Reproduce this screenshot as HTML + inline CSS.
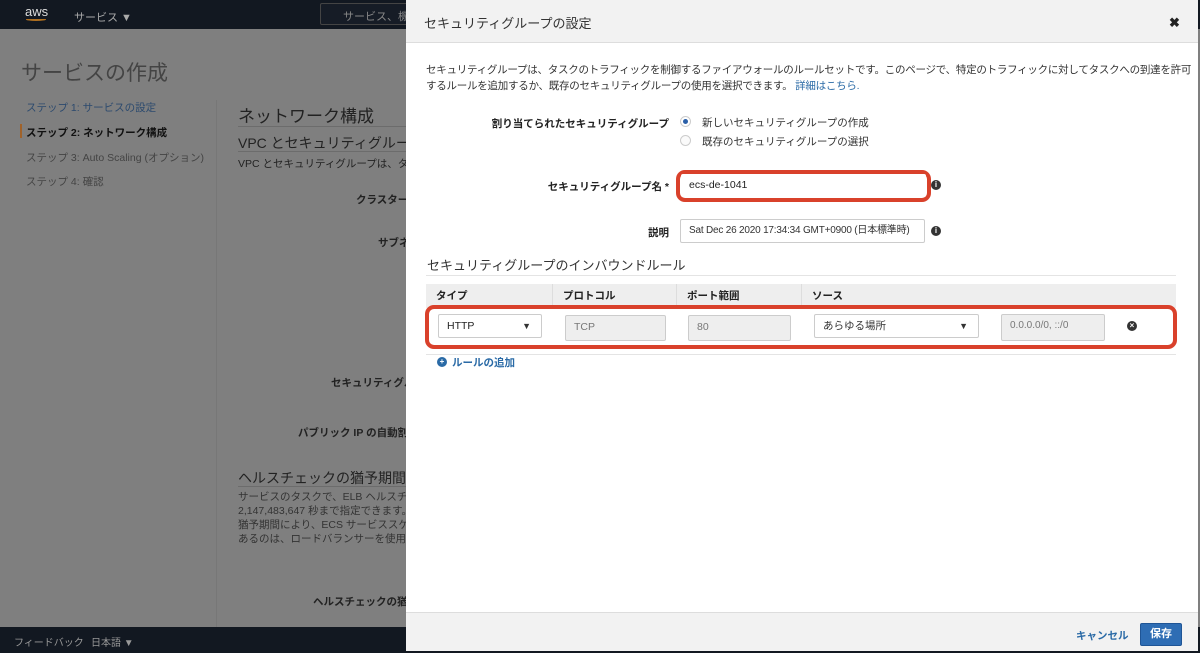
<!DOCTYPE html>
<html><head><meta charset="utf-8"><style>
*{box-sizing:border-box;margin:0;padding:0}
body{width:1200px;height:653px;overflow:hidden;position:relative;background:#7f7f7f;font-family:"Liberation Sans","Noto Sans CJK JP",sans-serif;font-size:11px;color:#222}
.a{position:absolute;white-space:nowrap}
.top{left:0;top:0;width:1200px;height:29px;background:#121821}
.bot{left:0;top:627px;width:1200px;height:26px;background:#121821}
.modal{left:406px;top:0;width:792px;height:651px;background:#fff;border-radius:0 0 4px 4px}
.mh{left:0;top:0;width:792px;height:43px;background:#f2f2f2;border-bottom:1px solid #ddd}
.mf{left:0;top:612px;width:792px;height:39px;background:#f2f2f2;border-top:1px solid #ddd}
.inp{border:1px solid #ccc;border-radius:2px;background:#fff;font-size:10.5px;padding-left:8px;line-height:22px;height:24px}
.ro{background:#eee;color:#777}
.sel:after{content:"▼";position:absolute;right:10px;font-size:9px;color:#333}
.th{top:284px;height:24px;background:#eee;font-weight:bold;font-size:10.5px;line-height:24px;padding-left:10px;border-right:1px solid #ddd}
.red{border:4px solid #d9412b;border-radius:9px}
.info{width:10px;height:10px;border-radius:50%;background:#333;color:#fff;font-size:8px;line-height:10px;text-align:center;font-weight:bold}
.lbl{left:0;width:263px;text-align:right;font-weight:bold;font-size:10.5px}
</style></head><body>
<div class="a top"></div>
<div class="a" style="left:25px;top:4px;color:#ddd;font-size:13px">aws</div>
<div class="a" style="left:26px;top:18px;width:20px;height:3px;border-bottom:2px solid #b07020;border-radius:0 0 50% 50%"></div>
<div class="a" style="left:74px;top:9px;color:#aaa;font-size:11px">サービス ▼</div>
<div class="a" style="left:320px;top:3px;width:90px;height:22px;border:1px solid #444;border-radius:2px;background:#161c26;color:#888;padding:4px 0 0 22px;font-size:11px">サービス、機</div>
<div class="a" style="left:21px;top:57px;font-size:21px;color:#444">サービスの作成</div>
<div class="a" style="left:26px;top:100px;color:#2c4a6e;font-size:10.5px">ステップ 1: サービスの設定</div>
<div class="a" style="left:20px;top:124px;width:2px;height:14px;background:#a0622a"></div>
<div class="a" style="left:26px;top:125px;font-weight:bold;color:#111;font-size:10.5px">ステップ 2: ネットワーク構成</div>
<div class="a" style="left:26px;top:150px;color:#444;font-size:10.5px">ステップ 3: Auto Scaling (オプション)</div>
<div class="a" style="left:26px;top:174px;color:#444;font-size:10.5px">ステップ 4: 確認</div>
<div class="a" style="left:216px;top:100px;width:1px;height:527px;background:#777"></div>
<div class="a" style="left:238px;top:102px;font-size:17px;color:#222">ネットワーク構成</div>
<div class="a" style="left:238px;top:126px;width:170px;height:1px;background:#6c6c6c"></div>
<div class="a" style="left:238px;top:133px;font-size:14px;color:#222">VPC とセキュリティグループ</div>
<div class="a" style="left:238px;top:151px;width:170px;height:1px;background:#6c6c6c"></div>
<div class="a" style="left:238px;top:156px;color:#222;font-size:10.5px">VPC とセキュリティグループは、タス</div>
<div class="a" style="left:356px;top:192px;font-weight:bold;font-size:10.5px">クラスター</div>
<div class="a" style="left:378px;top:235px;font-weight:bold;font-size:10.5px">サブネ</div>
<div class="a" style="left:331px;top:375px;font-weight:bold;font-size:10.5px">セキュリティグル</div>
<div class="a" style="left:298px;top:425px;font-weight:bold;font-size:10.5px">パブリック IP の自動割</div>
<div class="a" style="left:238px;top:468px;font-size:14px">ヘルスチェックの猶予期間</div>
<div class="a" style="left:238px;top:486px;width:170px;height:1px;background:#6c6c6c"></div>
<div class="a" style="left:238px;top:490px;color:#333;line-height:14px;font-size:10.5px">サービスのタスクで、ELB ヘルスチェ<br>2,147,483,647 秒まで指定できます。<br>猶予期間により、ECS サービススケジ<br>あるのは、ロードバランサーを使用す</div>
<div class="a" style="left:313px;top:594px;font-weight:bold;font-size:10.5px">ヘルスチェックの猶</div>
<div class="a bot"></div>
<div class="a" style="left:14px;top:634px;color:#999;font-size:10px">フィードバック</div>
<div class="a" style="left:91px;top:634px;color:#999;font-size:10px">日本語 ▼</div>

<div class="a modal">
<div class="a mh"></div>
<div class="a" style="left:18px;top:13px;font-size:13px;color:#333">セキュリティグループの設定</div>
<div class="a" style="left:763px;top:15px;font-size:13px;font-weight:bold">✖</div>
<div class="a" style="left:20px;top:62px;line-height:16px;color:#333;font-size:10.5px;letter-spacing:-0.25px">セキュリティグループは、タスクのトラフィックを制御するファイアウォールのルールセットです。このページで、特定のトラフィックに対してタスクへの到達を許可<br>するルールを追加するか、既存のセキュリティグループの使用を選択できます。 <span style="color:#2a6aa6">詳細はこちら.</span></div>
<div class="a lbl" style="top:116px">割り当てられたセキュリティグループ</div>
<div class="a" style="left:274px;top:116px;width:11px;height:11px;border-radius:50%;border:1px solid #ccc;background:#fff"><div style="margin:2px;width:5px;height:5px;border-radius:50%;background:#2a5fa8"></div></div>
<div class="a" style="left:296px;top:115px;color:#333;font-size:10.5px">新しいセキュリティグループの作成</div>
<div class="a" style="left:274px;top:135px;width:11px;height:11px;border-radius:50%;border:1px solid #ccc;background:#fafafa"></div>
<div class="a" style="left:296px;top:134px;color:#333;font-size:10.5px">既存のセキュリティグループの選択</div>
<div class="a lbl" style="top:179px">セキュリティグループ名 *</div>
<div class="a red" style="left:270px;top:170px;width:255px;height:32px"></div>
<div class="a inp" style="left:275px;top:174px;width:245px;height:23px;border:none">ecs-de-1041</div>
<div class="a info" style="left:525px;top:180px">i</div>
<div class="a lbl" style="top:225px">説明</div>
<div class="a inp" style="left:274px;top:219px;width:245px;color:#333;font-size:10px;letter-spacing:-0.2px">Sat Dec 26 2020 17:34:34 GMT+0900 (日本標準時)</div>
<div class="a info" style="left:525px;top:226px">i</div>
<div class="a" style="left:21px;top:255px;font-size:13px;color:#333">セキュリティグループのインバウンドルール</div>
<div class="a" style="left:20px;top:275px;width:750px;height:1px;background:#e4e4e4"></div>
<div class="a th" style="left:20px;width:127px">タイプ</div>
<div class="a th" style="left:147px;width:124px">プロトコル</div>
<div class="a th" style="left:271px;width:125px">ポート範囲</div>
<div class="a th" style="left:396px;width:374px;border:none">ソース</div>
<div class="a red" style="left:19px;top:305px;width:752px;height:44px"></div>
<div class="a inp sel" style="left:32px;top:314px;width:104px">HTTP</div>
<div class="a inp ro" style="left:159px;top:315px;width:101px;height:26px">TCP</div>
<div class="a inp ro" style="left:282px;top:315px;width:103px;height:26px">80</div>
<div class="a inp sel" style="left:408px;top:314px;width:165px;color:#333">あらゆる場所</div>
<div class="a inp ro" style="left:595px;top:314px;width:104px;height:27px;font-size:10px">0.0.0.0/0, ::/0</div>
<div class="a info" style="left:721px;top:321px">×</div>
<div class="a" style="left:20px;top:354px;width:750px;height:1px;background:#e4e4e4"></div>
<div class="a info" style="left:31px;top:357px;background:#2a6aa6">+</div>
<div class="a" style="left:46px;top:355px;color:#2a6aa6;font-weight:bold;font-size:10.5px">ルールの追加</div>
<div class="a mf"></div>
<div class="a" style="left:670px;top:628px;color:#2a6aa6;font-weight:bold;font-size:10.5px">キャンセル</div>
<div class="a" style="left:734px;top:623px;width:42px;height:23px;background:#2e6db4;border:1px solid #1f5596;border-radius:2px;color:#fff;font-weight:bold;text-align:center;line-height:21px">保存</div>
</div>
</body></html>
